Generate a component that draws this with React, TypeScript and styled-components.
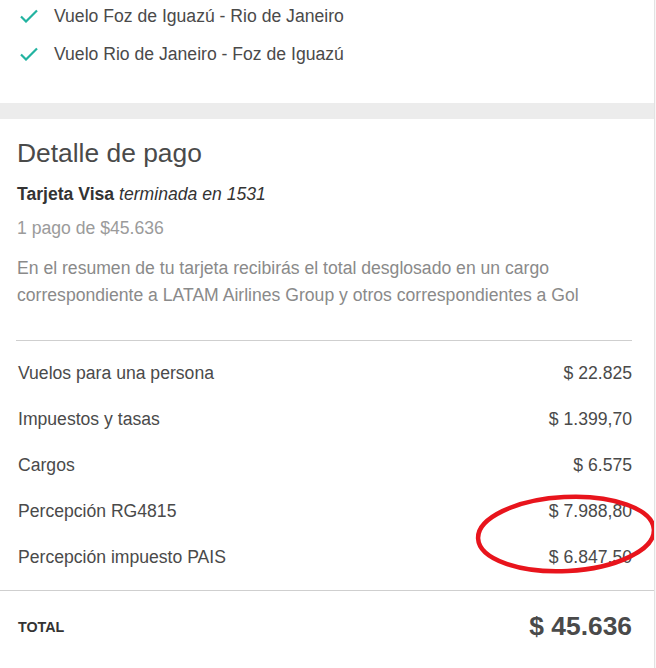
import React from 'react';
import styled, { createGlobalStyle } from 'styled-components';

const GlobalStyle = createGlobalStyle`
  html, body {
    margin: 0;
    padding: 0;
    background: #f7f7f7;
  }
  body {
    font-family: "Liberation Sans", Arial, sans-serif;
    color: #4a4a4a;
  }
`;

const Page = styled.div`
  position: relative;
  display: flex;
  flex-direction: column;
  width: 654px;
  height: 668px;
  overflow: hidden;
  background: #ececec;
  border-right: 1px solid #e2e2e2;
`;

const Card = styled.section<{ $height?: number }>`
  background: #ffffff;
  box-sizing: border-box;
  ${({ $height }) => ($height ? `height: ${$height}px; flex-shrink: 0;` : 'flex: 1;')}
`;

const Band = styled.div`
  height: 16px;
  flex-shrink: 0;
  background: #ececec;
`;

const CheckList = styled.ul`
  list-style: none;
  margin: 0;
  padding: 0 0 0 20px;
  display: flex;
  flex-direction: column;
  gap: 6px;
`;

const CheckItem = styled.li`
  display: flex;
  align-items: center;
  height: 32px;
  font-size: 17.6px;
  color: #4a4a4a;
`;

const CheckIcon = styled.svg`
  width: 18px;
  height: 14px;
  margin-right: 16px;
  flex-shrink: 0;
`;

const Summary = styled.div`
  padding: 18px 22px 10px 16px;
`;

const Title = styled.h2`
  margin: 0;
  font-size: 26.4px;
  line-height: 32px;
  font-weight: normal;
  color: #4a4a4a;
  padding-left: 1px;
`;

const CardLine = styled.div`
  margin-top: 12px;
  font-size: 17.6px;
  line-height: 26px;
  color: #333;
  padding-left: 1px;

  b {
    font-weight: bold;
  }
  i {
    font-style: italic;
  }
`;

const Installments = styled.div`
  margin-top: 8px;
  font-size: 17.6px;
  line-height: 26px;
  color: #9b9b9b;
  padding-left: 1px;
`;

const Note = styled.p`
  margin: 14px 0 0;
  font-size: 17.6px;
  line-height: 27px;
  color: #8a8a8a;
  padding-left: 1px;
`;

const Divider = styled.hr`
  margin: 31px 0 9px;
  border: 0;
  border-top: 1px solid #cfcfcf;
  height: 0;
`;

const Row = styled.div`
  display: flex;
  justify-content: space-between;
  align-items: center;
  height: 46px;
  padding-left: 2px;
  font-size: 17.6px;
  color: #4a4a4a;
`;

const TotalRow = styled.div`
  display: flex;
  justify-content: space-between;
  align-items: center;
  height: 71px;
  padding: 0 22px 0 18px;
  border-top: 1px solid #cfcfcf;
`;

const TotalLabel = styled.span`
  font-size: 14.3px;
  font-weight: bold;
  color: #333;
`;

const TotalValue = styled.span`
  font-size: 26.4px;
  font-weight: bold;
  color: #4a4a4a;
`;

const Mark = styled.svg`
  position: absolute;
  left: 470px;
  top: 489px;
  width: 200px;
  height: 92px;
  pointer-events: none;
`;

const Check = () => (
  <CheckIcon viewBox="0 0 18 14">
    <polyline points="1,7.5 6,12.5 17,1.5" fill="none" stroke="#22b3a0" strokeWidth="2.2" />
  </CheckIcon>
);

const flights = ['Vuelo Foz de Iguazú - Rio de Janeiro', 'Vuelo Rio de Janeiro - Foz de Iguazú'];

const charges = [
  { label: 'Vuelos para una persona', value: '$ 22.825' },
  { label: 'Impuestos y tasas', value: '$ 1.399,70' },
  { label: 'Cargos', value: '$ 6.575' },
  { label: 'Percepción RG4815', value: '$ 7.988,80' },
  { label: 'Percepción impuesto PAIS', value: '$ 6.847,50' },
];

const App = () => (
  <>
    <GlobalStyle />
    <Page>
      <Card $height={103}>
        <CheckList>
          {flights.map((f) => (
            <CheckItem key={f}>
              <Check />
              {f}
            </CheckItem>
          ))}
        </CheckList>
      </Card>
      <Band />
      <Card>
        <Summary>
          <Title>Detalle de pago</Title>
          <CardLine>
            <b>Tarjeta Visa</b> <i>terminada en 1531</i>
          </CardLine>
          <Installments>1 pago de $45.636</Installments>
          <Note>
            En el resumen de tu tarjeta recibirás el total desglosado en un cargo correspondiente a LATAM Airlines
            Group y otros correspondientes a Gol
          </Note>
          <Divider />
          {charges.map((c) => (
            <Row key={c.label}>
              <span>{c.label}</span>
              <span>{c.value}</span>
            </Row>
          ))}
        </Summary>
        <TotalRow>
          <TotalLabel>TOTAL</TotalLabel>
          <TotalValue>$ 45.636</TotalValue>
        </TotalRow>
      </Card>
      <Mark viewBox="0 0 200 92">
        <ellipse cx="96" cy="45" rx="88" ry="37" fill="none" stroke="#e8141c" strokeWidth="4.5" transform="rotate(-3 96 45)" />
      </Mark>
    </Page>
  </>
);

export default App;
